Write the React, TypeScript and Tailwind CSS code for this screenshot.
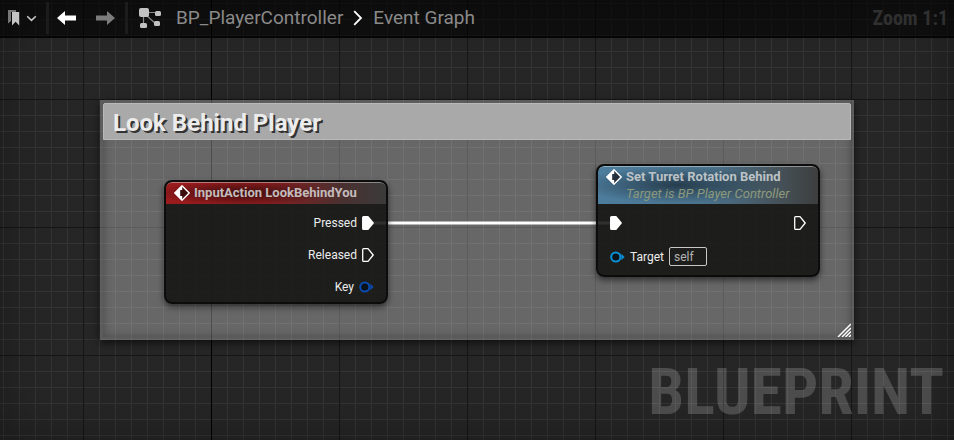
import type { ReactNode } from "react";

function ExecPin({ filled = false }: { filled?: boolean }) {
  return (
    <svg width="12" height="14" viewBox="0 0 12 14" className="shrink-0" aria-hidden="true">
      <path
        d="M1.6 .7H6L11.2 7 6 13.3H1.6Q.7 13.3 .7 12.4V1.6Q.7 .7 1.6 .7Z"
        fill={filled ? "#fff" : "none"}
        stroke="#fff"
        strokeWidth="1.3"
        strokeLinejoin="round"
      />
    </svg>
  );
}

function DataPin({ color }: { color: string }) {
  return (
    <svg width="15" height="12" viewBox="0 0 15 12" className="shrink-0" aria-hidden="true">
      <circle cx="5.8" cy="6" r="4.6" fill="#0b1118" stroke={color} strokeWidth="2" />
      <path d="M11.4 2.8 14.6 6 11.4 9.2Z" fill={color} />
    </svg>
  );
}

function EventIcon() {
  return (
    <svg width="16" height="16" viewBox="0 0 16 16" className="shrink-0" aria-hidden="true">
      <path d="M8 .8 15.2 8 8 15.2 .8 8Z" fill="rgba(20,8,10,0.6)" stroke="#fff" strokeWidth="1.4" />
      <path d="M8.2 .8V5H6.2V11H8.2V15.2L.8 8Z" fill="#fff" />
    </svg>
  );
}

function GraphNode({ className, header, children }: { className: string; header: ReactNode; children: ReactNode }) {
  return (
    <article
      className={`absolute w-56 overflow-hidden rounded-lg border-2 border-[#0c0c0c] bg-[#131512]/88 shadow-[0_3px_6px_rgba(0,0,0,0.55)] ${className}`}
    >
      {header}
      {children}
    </article>
  );
}

function Toolbar() {
  return (
    <header className="relative flex h-[38px] items-center border-b-2 border-black/60 bg-black/60 pr-[6px]">
      <button aria-label="Bookmarks" className="ml-2 flex h-9 w-[29px] items-center justify-between">
        <svg width="12" height="16" viewBox="0 0 12 16" aria-hidden="true">
          <path d="M0 0H8V2H3V11L0 13.5Z" fill="#777" />
          <path d="M4 2H11.2V15.6L7.6 11.8 4 15.6Z" fill="#c4c4c4" />
        </svg>
        <svg width="11" height="7" viewBox="0 0 11 7" aria-hidden="true">
          <path d="M1.2 1.2 5.5 5.4 9.8 1.2" fill="none" stroke="#c8c8c8" strokeWidth="1.5" />
        </svg>
      </button>
      <span className="ml-[9px] h-8 w-[3px] bg-[#1c1c1c]" />
      <button aria-label="Back" className="ml-2 text-white">
        <svg width="20" height="16" viewBox="0 0 20 16" aria-hidden="true">
          <path d="M0 8 8 1V5.6H19V10.4H8V15Z" fill="currentColor" />
        </svg>
      </button>
      <button aria-label="Forward" className="ml-[18px] text-[#7c7c7c]">
        <svg width="20" height="16" viewBox="0 0 20 16" aria-hidden="true">
          <path d="M20 8 12 1V5.6H1V10.4H12V15Z" fill="currentColor" />
        </svg>
      </button>
      <span className="ml-[10px] h-8 w-[3px] bg-[#1c1c1c]" />
      <svg width="24" height="22" viewBox="0 0 24 22" className="ml-[10px]" aria-hidden="true">
        <path d="M5.5 8V16M9 5.5H17M8 8 18 17" fill="none" stroke="#8a8a8a" strokeWidth="1.2" />
        <g fill="#c2c2c2">
          <rect x="1" y="1" width="10" height="9" rx="2" />
          <rect x="17" y="4" width="6" height="5" rx="1.5" />
          <rect x="2" y="16" width="7" height="5" rx="1.5" />
          <rect x="16" y="14" width="6" height="5" rx="1.5" />
        </g>
      </svg>
      <nav aria-label="Breadcrumb" className="ml-[14px] flex items-center text-[19px] leading-6 text-[#8a8a8a]">
        <a href="#blueprint">BP_PlayerController</a>
        <svg width="10" height="16" viewBox="0 0 10 16" className="mx-[10px]" aria-hidden="true">
          <path d="M1.2 1.2 8 8 1.2 14.8" fill="none" stroke="#fff" strokeWidth="1.8" />
        </svg>
        <a href="#event-graph">Event Graph</a>
      </nav>
      <span className="ml-auto font-['Roboto_Condensed','Liberation_Sans_Narrow',Roboto,sans-serif] text-xl font-bold text-[#303030]">
        Zoom 1:1
      </span>
    </header>
  );
}

export default function App() {
  return (
    <div className="relative flex min-h-screen flex-col overflow-hidden bg-[#262626] font-[Roboto,sans-serif]">
      <div className="absolute inset-0 bg-[linear-gradient(90deg,#343434_1px,transparent_1px),linear-gradient(#343434_1px,transparent_1px)] bg-size-[16px_16px] bg-position-[3px_3px]" />
      <div className="absolute inset-0 bg-[linear-gradient(90deg,#161616_1px,transparent_1px),linear-gradient(#161616_1px,transparent_1px)] bg-size-[128px_128px] bg-position-[83px_99px]" />
      <div className="absolute inset-y-0 left-[211px] w-px bg-black" />
      <div className="absolute inset-0 shadow-[inset_0_0_50px_rgba(0,0,0,0.35)]" />
      <Toolbar />
      <main className="relative flex-1">
        <section className="absolute top-[62px] left-[100px] h-60 w-[754px] border-3 border-black/10 bg-white/30 shadow-[0_3px_8px_rgba(0,0,0,0.6),inset_0_0_9px_rgba(0,0,0,0.3)]">
          <h1 className="h-[37px] rounded-t-xs border border-[#b8b8b8] bg-[#a9a9a9] px-[9px] text-2xl leading-[38px] font-bold text-[#ececec] [text-shadow:2px_2px_0_#333]">
            Look Behind Player
          </h1>
          <svg width="14" height="14" viewBox="0 0 14 14" className="absolute right-0 bottom-0" aria-hidden="true">
            <path d="M1 14 14 1M5 14 14 5M8.5 14 14 8.5M12 14 14 12" stroke="#fff" strokeWidth="1.5" />
          </svg>
        </section>

        <svg width="246" height="4" viewBox="0 0 246 4" className="absolute top-[183px] left-[370px]" aria-hidden="true">
          <path d="M0 2H246" stroke="#fff" strokeWidth="3" />
        </svg>

        <GraphNode
          className="top-[142px] left-[164px] h-[124px]"
          header={
            <h2 className="flex h-[22px] items-center gap-1 rounded-t-md border-t border-white/40 bg-[radial-gradient(ellipse_90px_12px_at_75px_10px,rgba(30,8,8,0.75),transparent),linear-gradient(90deg,#9c1b1d_0%,#8c1c1e_45%,#4a3030_80%,#3a3b3a_100%)] px-2 pb-[2px] text-[13px] leading-5 font-bold text-[#c4bcbc]">
              <EventIcon />
              InputAction LookBehindYou
            </h2>
          }
        >
          <ul className="flex flex-col items-end gap-4 pt-[11px] pr-3 text-xs leading-4 text-[#ececec]">
            <li className="flex items-center gap-[5px]">
              Pressed <ExecPin filled />
            </li>
            <li className="flex items-center gap-[5px]">
              Released <ExecPin />
            </li>
            <li className="flex items-center gap-[5px]">
              Key <DataPin color="#0b4bb0" />
            </li>
          </ul>
        </GraphNode>

        <GraphNode
          className="top-[126px] left-[596px] h-[113px]"
          header={
            <div className="flex h-[38px] gap-1 rounded-t-md border-t border-white/40 bg-[radial-gradient(ellipse_100px_18px_at_80px_18px,rgba(20,32,42,0.65),transparent),linear-gradient(90deg,#4d7d9d_0%,#4a728c_50%,#46545c_80%,#3d3e3e_100%)] px-2 pt-[2px]">
              <EventIcon />
              <div>
                <h2 className="text-[13px] leading-4 font-bold text-[#bcc2c6]">Set Turret Rotation Behind</h2>
                <p className="text-[13px] leading-[18px] text-[#8c997c] italic">Target is BP Player Controller</p>
              </div>
            </div>
          }
        >
          <div className="flex justify-between px-3 pt-3">
            <ExecPin filled />
            <ExecPin />
          </div>
          <label className="mt-[17px] flex items-center px-3 text-xs leading-4 text-[#ececec]">
            <DataPin color="#0a8fd6" />
            <span className="ml-[5px]">Target</span>
            <input
              defaultValue="self"
              className="ml-[5px] h-[19px] w-[38px] rounded-xs border border-[#c8c8c8] bg-transparent px-1 text-xs text-[#b4b4b4] outline-none"
            />
          </label>
        </GraphNode>
      </main>
      <div className="pointer-events-none absolute right-[10px] bottom-4 font-['Roboto_Condensed','Liberation_Sans_Narrow',Roboto,sans-serif] text-[64px] leading-[62px] font-bold text-white/18">
        BLUEPRINT
      </div>
    </div>
  );
}
